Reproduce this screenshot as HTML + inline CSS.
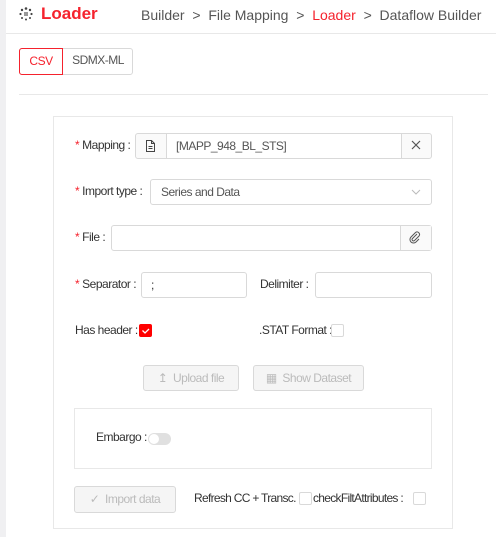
<!DOCTYPE html><html><head><style>
*{box-sizing:border-box;margin:0;padding:0}
body{width:496px;height:537px;background:#fff;font-family:"Liberation Sans",sans-serif;font-size:12px;letter-spacing:-0.5px;color:#333;position:relative;overflow:hidden}
.a{position:absolute}
.lab{position:absolute;font-size:12px;color:#333;white-space:nowrap}
.req{color:#f5222d;margin-right:3px}
.box{position:absolute;border:1px solid #d9d9d9;border-radius:3px;background:#fff}
.cb{position:absolute;width:13px;height:13px;border:1px solid #d9d9d9;border-radius:2px;background:#fff}
.btn{position:absolute;border:1px solid #d9d9d9;border-radius:3px;background:#f5f5f5;color:#bbb;font-size:12px;text-align:center}
</style></head><body>
<div class="a" style="left:0;top:0;width:6px;height:537px;background:#f0f0f2"></div>
<div class="a" style="left:6px;top:33px;width:490px;height:1px;background:#e8e8e8"></div>
<svg class="a" style="left:19px;top:7px" width="14" height="14" viewBox="0 0 14 14"><g fill="#444"><circle cx="7" cy="1.5" r="1.3"/><circle cx="11" cy="3" r="1.2"/><circle cx="12.5" cy="7" r="1.1"/><circle cx="11" cy="11" r="1"/><circle cx="7" cy="12.5" r="1"/><circle cx="3" cy="11" r="1"/><circle cx="1.5" cy="7" r="1.1"/><circle cx="3" cy="3" r="1.2"/><rect x="5" y="5" width="4" height="4" fill="#999"/></g></svg>
<div class="a" style="left:41px;top:4px;font-size:17px;font-weight:bold;color:#f5222d;letter-spacing:0">Loader</div>
<div class="a" style="left:141px;top:7px;font-size:14px;color:#555;white-space:nowrap;letter-spacing:0">Builder &nbsp;&gt;&nbsp; File Mapping &nbsp;&gt;&nbsp; <span style="color:#f5222d">Loader</span> &nbsp;&gt;&nbsp; Dataflow Builder</div>
<div class="a" style="left:19px;top:48px;width:114px;height:27px;border:1px solid #d9d9d9;border-radius:3px"></div>
<div class="a" style="left:19px;top:48px;width:44px;height:27px;border:1px solid #f5222d;border-radius:3px 0 0 3px;color:#f5222d;text-align:center;line-height:25px">CSV</div>
<div class="a" style="left:63px;top:48px;width:70px;height:27px;text-align:center;line-height:25px;color:#555">SDMX-ML</div>
<div class="a" style="left:19px;top:94px;width:469px;height:1px;background:#e8e8e8"></div>
<div class="a" style="left:53px;top:116px;width:400px;height:413px;border:1px solid #e8e8e8"></div>

<div class="lab" style="left:75px;top:138px"><span class="req">*</span>Mapping :</div>
<div class="box" style="left:135px;top:133px;width:297px;height:26px;background:#fafafa"></div>
<div class="a" style="left:166px;top:133px;width:236px;height:26px;background:#fff;border:1px solid #d9d9d9;padding-left:9px;line-height:24px;color:#555">[MAPP_948_BL_STS]</div>
<svg class="a" style="left:145px;top:140px" width="11" height="12" viewBox="0 0 11 12"><path d="M1.5 .5h5l3 3v8h-8z M6.5 .5v3h3 M3.5 6.5h4 M3.5 8.5h4" fill="none" stroke="#444"/></svg>
<svg class="a" style="left:411px;top:140px" width="10" height="10"><path d="M1 1L9 9M9 1L1 9" stroke="#555" stroke-width="1.2"/></svg>

<div class="lab" style="left:75px;top:184px"><span class="req">*</span>Import type :</div>
<div class="box" style="left:150px;top:179px;width:282px;height:26px;padding-left:10px;line-height:24px;color:#555">Series and Data</div>
<svg class="a" style="left:411px;top:188px" width="10" height="8"><path d="M1 2l4 4 4-4" fill="none" stroke="#bbb"/></svg>

<div class="lab" style="left:75px;top:230px"><span class="req">*</span>File :</div>
<div class="box" style="left:111px;top:225px;width:321px;height:26px"></div>
<div class="a" style="left:400px;top:226px;width:31px;height:24px;background:#fafafa;border-left:1px solid #d9d9d9"></div>
<svg class="a" style="left:409px;top:231px" width="12" height="13" viewBox="0 0 12 13"><path d="M8 3L3.5 7.5a1.3 1.3 0 0 0 2 2L10 5a2.5 2.5 0 0 0-3.5-3.5L2 6a3.5 3.5 0 0 0 5 5l3-3" fill="none" stroke="#555"/></svg>

<div class="lab" style="left:75px;top:277px"><span class="req">*</span>Separator :</div>
<div class="box" style="left:141px;top:272px;width:106px;height:26px;padding-left:9px;line-height:24px">;</div>
<div class="lab" style="left:260px;top:277px">Delimiter :</div>
<div class="box" style="left:315px;top:272px;width:117px;height:26px"></div>

<div class="lab" style="left:75px;top:323px">Has header :</div>
<div class="a" style="left:139px;top:324px;width:13px;height:13px;background:#f00;border-radius:2px"></div>
<svg class="a" style="left:139px;top:324px" width="13" height="13"><path d="M3.5 6.5l2.5 2.5 4-4" fill="none" stroke="#fff" stroke-width="1.3"/></svg>
<div class="lab" style="left:259px;top:323px">.STAT Format :</div>
<div class="cb" style="left:331px;top:324px"></div>

<div class="btn" style="left:143px;top:365px;width:96px;height:26px;line-height:24px">&#8613;&nbsp; Upload file</div>
<div class="btn" style="left:253px;top:365px;width:111px;height:26px;line-height:24px">&#9638;&nbsp; Show Dataset</div>

<div class="a" style="left:74px;top:408px;width:358px;height:61px;border:1px solid #e8e8e8"></div>
<div class="lab" style="left:96px;top:430px">Embargo :</div>
<div class="a" style="left:148px;top:433px;width:23px;height:12px;border-radius:6px;background:#e0e0e0"></div>
<div class="a" style="left:149px;top:434px;width:10px;height:10px;border-radius:5px;background:#fff"></div>

<div class="btn" style="left:74px;top:486px;width:102px;height:27px;line-height:25px">&#10003;&nbsp; Import data</div>
<div class="lab" style="left:194px;top:491px;letter-spacing:-0.7px">Refresh CC + Transc. :</div>
<div class="cb" style="left:299px;top:492px"></div>
<div class="lab" style="left:313px;top:491px;letter-spacing:-0.7px">checkFiltAttributes :</div>
<div class="cb" style="left:413px;top:492px"></div>
</body></html>
